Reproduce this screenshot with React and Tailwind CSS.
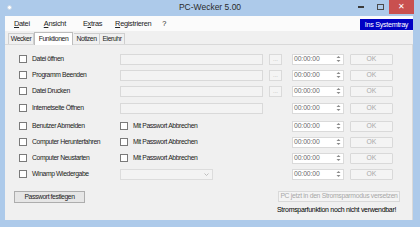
import React from "react";

const F = { fontFamily: '"Liberation Sans", Arial, sans-serif' };

function Check() {
  return <div className="w-[8px] h-[8px] border border-[#7a7a7a] bg-white shrink-0" />;
}

function Spin() {
  return (
    <svg width="5" height="8" viewBox="0 0 5 8" className="shrink-0">
      <path d="M0.5 3 L2.5 1 L4.5 3 Z" fill="#8a8a8a" />
      <path d="M0.5 5 L2.5 7 L4.5 5 Z" fill="#8a8a8a" />
    </svg>
  );
}

function TimeField() {
  return (
    <div className="ml-[10px] w-[52px] h-[11px] bg-white border border-[#dadada] flex items-center pl-[1px] pr-[2px] justify-between">
      <span className="text-[6.8px] leading-none text-[#6a6a6a] tracking-[-0.1px]">00:00:00</span>
      <Spin />
    </div>
  );
}

function OkBtn() {
  return (
    <div className="ml-[6px] w-[43px] h-[11px] bg-[#f4f4f4] border border-[#d9d9d9] rounded-[1px] flex items-center justify-center text-[6.8px] leading-none text-[#a8a8a8]">
      OK
    </div>
  );
}

const lbl = "text-[6.8px] leading-none text-[#222] whitespace-nowrap tracking-[-0.4px]";

function Row({ label, kind, extra = "" }) {
  return (
    <div className={`h-[16px] flex items-center pl-[14px] ${extra}`}>
      <div className="w-[101px] flex items-center gap-[5px]">
        <Check />
        <span className={lbl}>{label}</span>
      </div>
      {kind === "file" || kind === "url" ? (
        <div className="w-[143px] h-[11px] bg-[#f3f3f3] border border-[#d9d9d9]" />
      ) : kind === "pw" ? (
        <div className="w-[143px] flex items-center gap-[5px]">
          <Check />
          <span className={lbl}>Mit Passwort Abbrechen</span>
        </div>
      ) : (
        <div className="w-[143px]">
          <div className="w-[93px] h-[11px] bg-[#f3f3f3] border border-[#dcdcdc] flex items-center justify-end pr-[3px]">
            <svg width="5" height="3" viewBox="0 0 5 3">
              <path d="M0.5 0.5 L2.5 2.5 L4.5 0.5" fill="none" stroke="#b0b0b0" strokeWidth="0.8" />
            </svg>
          </div>
        </div>
      )}
      {kind === "file" ? (
        <div className="ml-[6px] w-[13px] h-[11px] bg-[#f4f4f4] border border-[#dadada] flex items-end justify-center pb-[2px] text-[6px] leading-none text-[#b0b0b0]">
          ...
        </div>
      ) : (
        <div className="ml-[6px] w-[13px]" />
      )}
      <TimeField />
      <OkBtn />
    </div>
  );
}

export default function App() {
  return (
    <div className="w-[420px] h-[227px] bg-[#adcaea] flex flex-col overflow-hidden" style={F}>
      {/* title bar */}
      <div className="h-[16px] grid grid-cols-[1fr_auto_1fr] items-start shrink-0">
        <div className="pl-[7px] pt-[5px]">
          <div className="w-[5px] h-[5px] rounded-full bg-white border border-[#c8d6e6]" />
        </div>
        <div className="pt-[3px] text-[8.5px] leading-none text-[#2a2a2a]">
          PC-Wecker 5.00
        </div>
        <div className="flex justify-end items-start pr-[6px]">
          <div className="w-[20px] h-[13px] flex items-center justify-center">
            <div className="w-[6px] h-[1.5px] bg-[#3b3b3b] mt-[1px]" />
          </div>
          <div className="w-[18px] h-[13px] flex items-center justify-center">
            <div className="w-[7px] h-[6px] border border-[#4a4a4a]" />
          </div>
          <div className="w-[25px] h-[14px] bg-[#c9504f] flex items-center justify-center text-white text-[8px] leading-none">
            ✕
          </div>
        </div>
      </div>

      {/* client */}
      <div className="flex-1 flex flex-col ml-[5px] mr-[7px] mb-[7px] bg-[#f0f0f0]">
        {/* menu */}
        <div className="h-[15px] bg-[#fbfbfb] flex items-center text-[7.4px] leading-none text-[#222] tracking-[-0.3px] shrink-0">
          <span className="ml-[9px]"><u>D</u>atei</span>
          <span className="ml-[14px]"><u>A</u>nsicht</span>
          <span className="ml-[17px]">E<u>x</u>tras</span>
          <span className="ml-[13px]"><u>R</u>egistrieren</span>
          <span className="ml-[11px]">?</span>
          <div className="ml-auto self-start mt-[3px] h-[11px] w-[53px] bg-[#0000c4] text-white flex items-center justify-center text-[7.2px] leading-none tracking-[-0.3px]">
            Ins Systemtray
          </div>
        </div>
        {/* tabs */}
        <div className="h-[13px] flex items-end pl-[3px] text-[6.8px] leading-none text-[#222] tracking-[-0.4px] shrink-0">
          <div className="h-[11px] w-[26px] border border-b-0 border-[#cfcfcf] bg-[#f0f0f0] flex items-center justify-center">Wecker</div>
          <div className="h-[13px] w-[39px] border border-b-0 border-[#bdbdbd] bg-white flex items-center justify-center relative top-[1px]">Funktionen</div>
          <div className="h-[11px] w-[26px] border border-b-0 border-l-0 border-[#cfcfcf] bg-[#f0f0f0] flex items-center justify-center ml-[1px]">Notizen</div>
          <div className="h-[11px] w-[25px] border border-b-0 border-l-0 border-[#cfcfcf] bg-[#f0f0f0] flex items-center justify-center">Eieruhr</div>
        </div>
        {/* panel */}
        <div className="flex-1 border-t border-r border-[#d9d9d9] bg-[#f0f0f0] flex flex-col pt-[6px]">
          <Row label="Datei öffnen" kind="file" />
          <Row label="Programm Beenden" kind="file" />
          <Row label="Datei Drucken" kind="file" />
          <Row label="Internetseite  Öffnen" kind="url" extra="mt-[1px]" />
          <Row label="Benutzer Abmelden" kind="pw" extra="mt-[2px]" />
          <Row label="Computer Herunterfahren" kind="pw" />
          <Row label="Computer Neustarten" kind="pw" />
          <Row label="Winamp Wiedergabe" kind="select" />
          <div className="flex items-start mt-[9px]">
            <div className="ml-[9px] w-[71px] h-[12px] bg-[#e6e6e6] border border-[#adadad] flex items-center justify-center text-[6.8px] leading-none text-[#222] tracking-[-0.4px]">
              Passwort festlegen
            </div>
            <div className="ml-auto mr-[12px] flex flex-col items-start">
              <div className="w-[122px] h-[11px] bg-[#f4f4f4] border border-[#d9d9d9] flex items-center justify-center text-[6.8px] leading-none text-[#a8a8a8] whitespace-nowrap tracking-[-0.3px]">
                PC jetzt in den Stromsparmodus versetzen
              </div>
              <div className="mt-[4px] ml-[-1px] text-[7px] leading-none text-black whitespace-nowrap tracking-[-0.3px]">
                Stromsparfunktion noch nicht verwendbar!
              </div>
            </div>
          </div>
        </div>
      </div>
    </div>
  );
}
